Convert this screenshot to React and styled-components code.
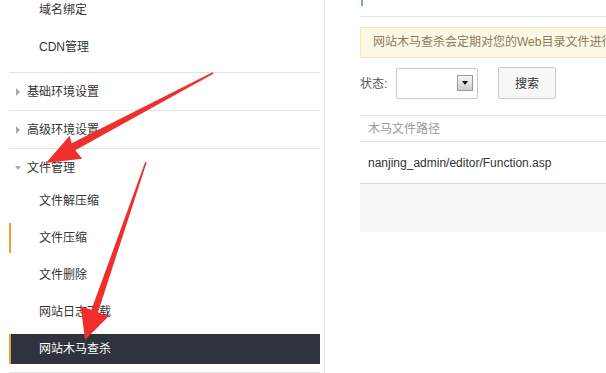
import React from 'react';
import styled, { createGlobalStyle } from 'styled-components';

const GlobalStyle = createGlobalStyle`
  body {
    margin: 0;
    overflow: hidden;
    background: #fff;
    font-family: "Liberation Sans", "Noto Sans CJK SC", sans-serif;
    font-size: 12px;
    color: #333;
  }
`

const groups = [
  { title: null, items: ['域名绑定', 'CDN管理'] },
  { title: '基础环境设置', items: [] },
  { title: '高级环境设置', items: [] },
  {
    title: '文件管理',
    open: true,
    items: ['文件解压缩', '文件压缩', '文件删除', '网站日志下载', '网站木马查杀'],
  },
]

export default function App() {
  return (
    <Page>
      <GlobalStyle />
      <Sidebar>
        <Nav>
          {groups.map((group, i) => (
            <Group key={i}>
              {group.title && (
                <GroupHeader>
                  <CaretBox>
                    <Caret $open={group.open} />
                  </CaretBox>
                  {group.title}
                </GroupHeader>
              )}
              {group.items.length > 0 && (
                <SubList $first={i === 0}>
                  {group.items.map((item) => (
                    <SubItem
                      key={item}
                      $active={item === '网站木马查杀'}
                      $marked={item === '文件压缩'}
                    >
                      {item}
                    </SubItem>
                  ))}
                </SubList>
              )}
            </Group>
          ))}
        </Nav>
      </Sidebar>

      <Main>
        <TitleBar>
          <TitleMark />
        </TitleBar>
        <Notice>网站木马查杀会定期对您的Web目录文件进行扫描</Notice>
        <FormRow>
          <Label>状态:</Label>
          <Select>
            <DropButton>
              <DropArrow />
            </DropButton>
          </Select>
          <Button>搜索</Button>
        </FormRow>
        <Table>
          <HeadRow>木马文件路径</HeadRow>
          <DataRow>nanjing_admin/editor/Function.asp</DataRow>
          <TableFooter />
        </Table>
      </Main>

      <Annotation viewBox="0 0 606 373">
        <polygon points="212.6,72.3 71.6,143.2 69.6,135.8 46,163 82.2,158.8 75.3,150.2 213.4,73.7" />
        <polygon points="145.3,161.8 91.4,309.8 80.8,306.4 85,340 108.4,316.6 98,312.2 146.7,162.2" />
      </Annotation>
    </Page>
  )
}

const Page = styled.div`
  position: relative;
  display: flex;
  width: 606px;
  height: 373px;
  overflow: hidden;
`

const Sidebar = styled.aside`
  flex: 0 0 325px;
  box-sizing: border-box;
  padding: 0 4px 0 9px;
  border-right: 1px solid #e3e3e3;
`

const Nav = styled.div`
  margin-top: -5px;
`

const Group = styled.div`
  border-bottom: 1px solid #e2e2e2;
`

const GroupHeader = styled.div`
  display: flex;
  align-items: center;
  box-sizing: border-box;
  height: 37px;
  padding: 0 0 3px 6px;
  color: #333;
`

const CaretBox = styled.span`
  display: flex;
  align-items: center;
  width: 8px;
  margin-right: 4px;
`

const Caret = styled.span`
  width: 0;
  height: 0;
  ${({ $open }) =>
    $open
      ? `
    margin-top: 3px;
    border-top: 4px solid #a8a8a8;
    border-left: 3.5px solid transparent;
    border-right: 3.5px solid transparent;
  `
      : `
    margin: 3px 0 0 1px;
    border-left: 4px solid #a8a8a8;
    border-top: 4px solid transparent;
    border-bottom: 4px solid transparent;
  `}
`

const SubList = styled.div`
  padding-bottom: ${({ $first }) => ($first ? '3px' : '1px')};
`

const SubItem = styled.div`
  display: flex;
  align-items: center;
  box-sizing: border-box;
  height: 30px;
  margin-bottom: 7px;
  padding: 0 0 3px 28px;
  border-left: 2px solid ${({ $active, $marked }) => ($active || $marked ? '#eba136' : 'transparent')};
  background: ${({ $active }) => ($active ? '#2f333d' : 'transparent')};
  color: ${({ $active }) => ($active ? '#fff' : '#333')};
`

const Main = styled.main`
  flex: 0 0 420px;
  margin-left: 35px;
`

const TitleBar = styled.div`
  height: 16px;
  border-bottom: 1px solid #e6e6e6;
`

const TitleMark = styled.div`
  height: 6px;
  margin-left: 1px;
  border-left: 2px solid #7aa7d8;
`

const Notice = styled.div`
  box-sizing: border-box;
  height: 31px;
  margin-top: 10px;
  padding-left: 12px;
  line-height: 28px;
  border: 1px solid #f6e8bf;
  background: #fdf8e6;
  color: #8c7a58;
  white-space: nowrap;
  overflow: hidden;
`

const FormRow = styled.div`
  display: flex;
  align-items: center;
  height: 32px;
  margin-top: 9px;
`

const Label = styled.span`
  width: 36px;
  margin-bottom: 2px;
  color: #555;
`

const Select = styled.div`
  display: flex;
  align-items: center;
  justify-content: flex-end;
  box-sizing: border-box;
  width: 82px;
  height: 31px;
  padding-right: 4px;
  border: 1px solid #cacaca;
  border-radius: 2px;
  background: #fff;
`

const DropButton = styled.span`
  display: flex;
  align-items: center;
  justify-content: center;
  box-sizing: border-box;
  width: 16px;
  height: 16px;
  border: 1px solid #9a9a9a;
  background: linear-gradient(#f6f6f6, #cdcdcd);
`

const DropArrow = styled.span`
  width: 0;
  height: 0;
  border-top: 4px solid #111;
  border-left: 3.5px solid transparent;
  border-right: 3.5px solid transparent;
`

const Button = styled.button`
  box-sizing: border-box;
  width: 58px;
  height: 32px;
  margin-left: 20px;
  padding: 0 0 2px;
  border: 1px solid #cccccc;
  border-radius: 2px;
  background: #f7f7f7;
  font-family: inherit;
  font-size: 12px;
  color: #333;
`

const Table = styled.div`
  margin-top: 16px;
  border-top: 1px solid #e4e4e4;
`

const HeadRow = styled.div`
  display: flex;
  align-items: center;
  box-sizing: border-box;
  height: 26px;
  padding: 0 0 3px 8px;
  border-bottom: 1px solid #e4e4e4;
  color: #999;
`

const DataRow = styled.div`
  display: flex;
  align-items: center;
  height: 41px;
  padding-left: 8px;
  border-bottom: 1px solid #dadada;
  color: #333;
`

const TableFooter = styled.div`
  height: 48px;
  background: #f8f8f8;
`

const Annotation = styled.svg`
  position: absolute;
  top: 0;
  left: 0;
  width: 606px;
  height: 373px;
  pointer-events: none;
  fill: #ee2f2e;
`
